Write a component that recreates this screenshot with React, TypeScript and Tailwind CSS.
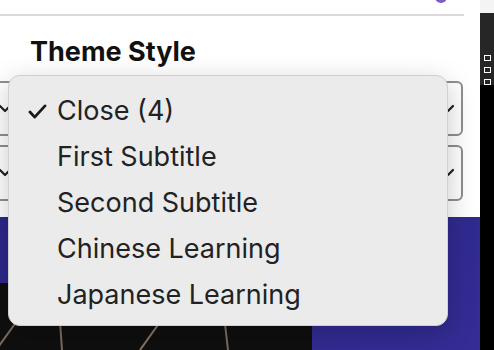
const items = ['Close (4)', 'First Subtitle', 'Second Subtitle', 'Chinese Learning', 'Japanese Learning'];

function Chevron({ className }: { className?: string }) {
  return (
    <svg viewBox="0 0 14 10" className={className} fill="none">
      <path d="M2 2 L7 7 L12 2" stroke="#1f1f1f" strokeWidth="2.2" strokeLinecap="round" strokeLinejoin="round" />
    </svg>
  );
}

function SelectBox({ height }: { height: string }) {
  return (
    <div className={`-ml-[20px] w-[483px] ${height} flex items-center justify-between rounded-md border-2 border-[#8e8e8e] bg-white pl-[16px] pr-[6px]`}>
      <Chevron className="w-[14px] h-[10px]" />
      <Chevron className="w-[14px] h-[10px]" />
    </div>
  );
}

function Menu() {
  return (
    <div className="absolute left-[8px] top-[75px] w-[440px] h-[251px] rounded-[12px] border border-[#cfcfcf] bg-[#ebebeb] pt-[12px] shadow-[0_8px_28px_rgba(0,0,0,0.22)]">
      {items.map((label, i) => (
        <div key={label} className="flex h-[46px] items-center text-[27px] text-[#222] font-['Inter',sans-serif]">
          <div className="w-[49px] flex items-center">
            {i === 0 && (
              <svg viewBox="0 0 20 16" className="ml-[19px] w-[19px] h-[15px]" fill="none">
                <path d="M2 8.5 L7 14 L18 2" stroke="#1a1a1a" strokeWidth="3" strokeLinecap="round" strokeLinejoin="round" />
              </svg>
            )}
          </div>
          <span className="-ml-[1px]">{label}</span>
        </div>
      ))}
    </div>
  );
}

export default function App() {
  return (
    <div className="relative w-[494px] h-[350px] overflow-hidden bg-black flex font-['Inter',sans-serif]">
      <div className="w-[480px] flex flex-col">
        <div className="relative h-[217px] bg-white overflow-hidden">
          <div className="absolute left-[435px] -top-[9px] w-[12px] h-[12px] rounded-full bg-[#7a5bc9]" />
          <div className="h-[16px] w-[464px] border-b-2 border-[#dadada]" />
          <div className="mt-[21px] pl-[30px] h-[30px] leading-[30px] text-[27px] font-bold text-[#111]">Theme Style</div>
          <div className="mt-[14px]">
            <SelectBox height="h-[55px]" />
          </div>
          <div className="mt-[9px]">
            <SelectBox height="h-[56px]" />
          </div>
        </div>
        <div className="flex-1 flex flex-col bg-gradient-to-br from-[#2c278a] to-[#342d96]">
          <div className="h-[66px]" />
          <div className="flex-1 flex">
            <div className="w-[312px] bg-[#0f0f10]">
              <svg viewBox="0 0 312 67" className="w-full h-full">
                <path d="M-4 67 L30 20" stroke="#7d6c5e" strokeWidth="2" />
                <path d="M62 67 L58 10" stroke="#7d6c5e" strokeWidth="2" />
                <path d="M140 67 L170 25" stroke="#8a7866" strokeWidth="2" />
                <path d="M228 67 L222 15" stroke="#7d6c5e" strokeWidth="2" />
                <path d="M30 20 L140 10" stroke="#5e5248" strokeWidth="1.5" />
              </svg>
            </div>
            <div className="flex-1" />
          </div>
        </div>
      </div>
      <div className="w-[14px] flex flex-col">
        <div className="h-[13px] bg-[#f4f4f4]" />
        <div className="h-[72px] bg-[#262626] flex flex-col items-center pt-[42px] gap-[6px]">
          <div className="w-[7px] h-[6px] border-[1.5px] border-white" />
          <div className="w-[7px] h-[6px] border-[1.5px] border-white" />
          <div className="w-[7px] h-[6px] border-[1.5px] border-white" />
        </div>
        <div className="flex-1 bg-black" />
      </div>
      <Menu />
    </div>
  );
}
